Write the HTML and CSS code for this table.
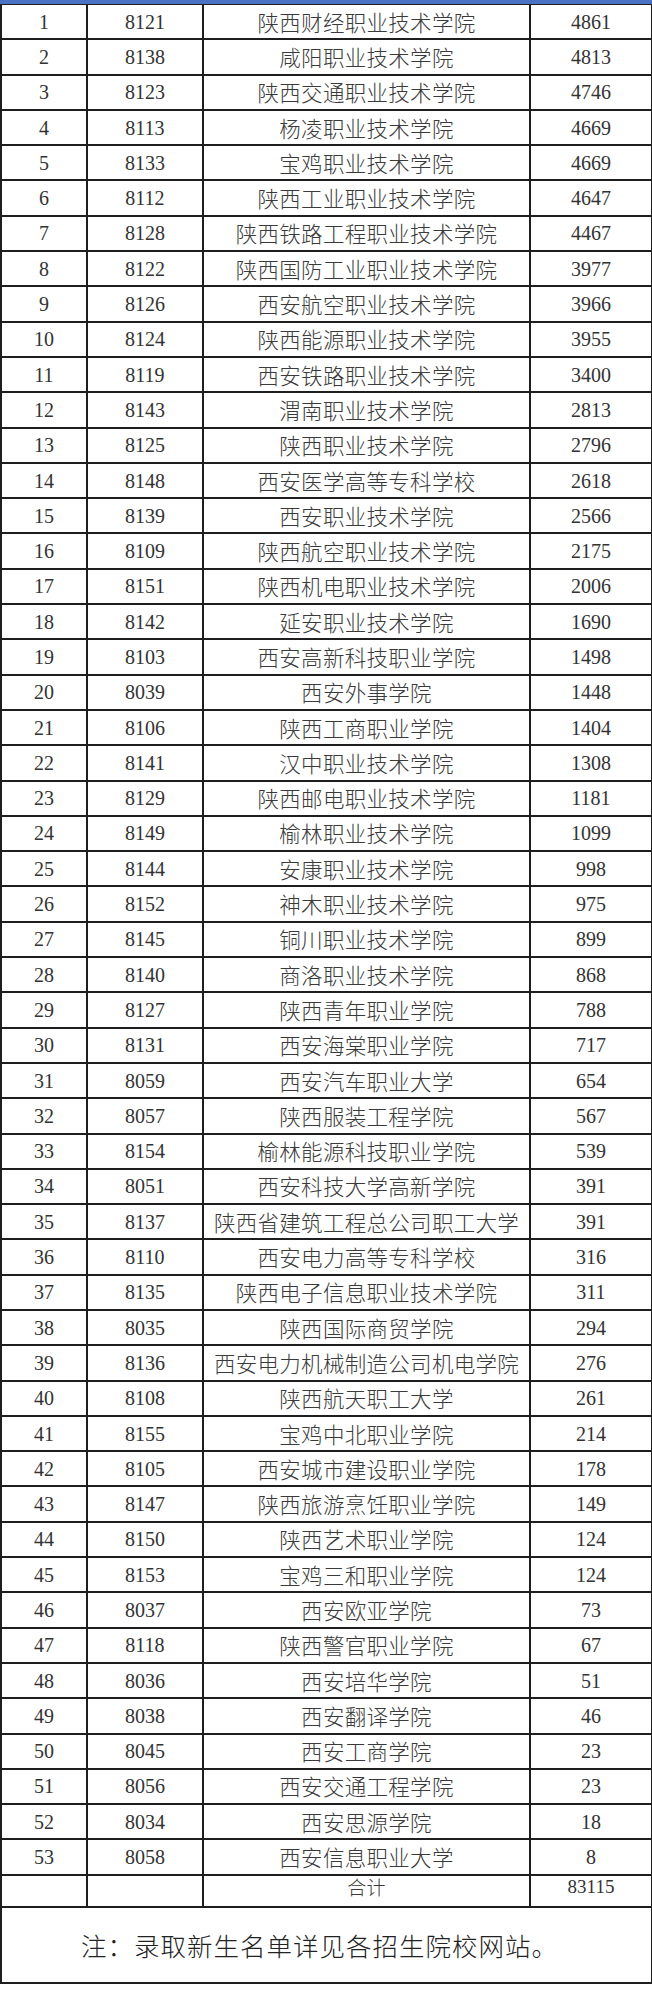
FILE: index.html
```html
<!DOCTYPE html>
<html lang="zh">
<head>
<meta charset="utf-8">
<link rel="stylesheet" href="styles.css">
</head>
<body>
<div class="topbar"></div>
<table class="list">
<colgroup><col class="c1"><col class="c2"><col class="c3"><col class="c4"></colgroup>
<tbody>
<tr><td>1</td><td>8121</td><td class="zh">陕西财经职业技术学院</td><td>4861</td></tr>
<tr><td>2</td><td>8138</td><td class="zh">咸阳职业技术学院</td><td>4813</td></tr>
<tr><td>3</td><td>8123</td><td class="zh">陕西交通职业技术学院</td><td>4746</td></tr>
<tr><td>4</td><td>8113</td><td class="zh">杨凌职业技术学院</td><td>4669</td></tr>
<tr><td>5</td><td>8133</td><td class="zh">宝鸡职业技术学院</td><td>4669</td></tr>
<tr><td>6</td><td>8112</td><td class="zh">陕西工业职业技术学院</td><td>4647</td></tr>
<tr><td>7</td><td>8128</td><td class="zh">陕西铁路工程职业技术学院</td><td>4467</td></tr>
<tr><td>8</td><td>8122</td><td class="zh">陕西国防工业职业技术学院</td><td>3977</td></tr>
<tr><td>9</td><td>8126</td><td class="zh">西安航空职业技术学院</td><td>3966</td></tr>
<tr><td>10</td><td>8124</td><td class="zh">陕西能源职业技术学院</td><td>3955</td></tr>
<tr><td>11</td><td>8119</td><td class="zh">西安铁路职业技术学院</td><td>3400</td></tr>
<tr><td>12</td><td>8143</td><td class="zh">渭南职业技术学院</td><td>2813</td></tr>
<tr><td>13</td><td>8125</td><td class="zh">陕西职业技术学院</td><td>2796</td></tr>
<tr><td>14</td><td>8148</td><td class="zh">西安医学高等专科学校</td><td>2618</td></tr>
<tr><td>15</td><td>8139</td><td class="zh">西安职业技术学院</td><td>2566</td></tr>
<tr><td>16</td><td>8109</td><td class="zh">陕西航空职业技术学院</td><td>2175</td></tr>
<tr><td>17</td><td>8151</td><td class="zh">陕西机电职业技术学院</td><td>2006</td></tr>
<tr><td>18</td><td>8142</td><td class="zh">延安职业技术学院</td><td>1690</td></tr>
<tr><td>19</td><td>8103</td><td class="zh">西安高新科技职业学院</td><td>1498</td></tr>
<tr><td>20</td><td>8039</td><td class="zh">西安外事学院</td><td>1448</td></tr>
<tr><td>21</td><td>8106</td><td class="zh">陕西工商职业学院</td><td>1404</td></tr>
<tr><td>22</td><td>8141</td><td class="zh">汉中职业技术学院</td><td>1308</td></tr>
<tr><td>23</td><td>8129</td><td class="zh">陕西邮电职业技术学院</td><td>1181</td></tr>
<tr><td>24</td><td>8149</td><td class="zh">榆林职业技术学院</td><td>1099</td></tr>
<tr><td>25</td><td>8144</td><td class="zh">安康职业技术学院</td><td>998</td></tr>
<tr><td>26</td><td>8152</td><td class="zh">神木职业技术学院</td><td>975</td></tr>
<tr><td>27</td><td>8145</td><td class="zh">铜川职业技术学院</td><td>899</td></tr>
<tr><td>28</td><td>8140</td><td class="zh">商洛职业技术学院</td><td>868</td></tr>
<tr><td>29</td><td>8127</td><td class="zh">陕西青年职业学院</td><td>788</td></tr>
<tr><td>30</td><td>8131</td><td class="zh">西安海棠职业学院</td><td>717</td></tr>
<tr><td>31</td><td>8059</td><td class="zh">西安汽车职业大学</td><td>654</td></tr>
<tr><td>32</td><td>8057</td><td class="zh">陕西服装工程学院</td><td>567</td></tr>
<tr><td>33</td><td>8154</td><td class="zh">榆林能源科技职业学院</td><td>539</td></tr>
<tr><td>34</td><td>8051</td><td class="zh">西安科技大学高新学院</td><td>391</td></tr>
<tr><td>35</td><td>8137</td><td class="zh">陕西省建筑工程总公司职工大学</td><td>391</td></tr>
<tr><td>36</td><td>8110</td><td class="zh">西安电力高等专科学校</td><td>316</td></tr>
<tr><td>37</td><td>8135</td><td class="zh">陕西电子信息职业技术学院</td><td>311</td></tr>
<tr><td>38</td><td>8035</td><td class="zh">陕西国际商贸学院</td><td>294</td></tr>
<tr><td>39</td><td>8136</td><td class="zh">西安电力机械制造公司机电学院</td><td>276</td></tr>
<tr><td>40</td><td>8108</td><td class="zh">陕西航天职工大学</td><td>261</td></tr>
<tr><td>41</td><td>8155</td><td class="zh">宝鸡中北职业学院</td><td>214</td></tr>
<tr><td>42</td><td>8105</td><td class="zh">西安城市建设职业学院</td><td>178</td></tr>
<tr><td>43</td><td>8147</td><td class="zh">陕西旅游烹饪职业学院</td><td>149</td></tr>
<tr><td>44</td><td>8150</td><td class="zh">陕西艺术职业学院</td><td>124</td></tr>
<tr><td>45</td><td>8153</td><td class="zh">宝鸡三和职业学院</td><td>124</td></tr>
<tr><td>46</td><td>8037</td><td class="zh">西安欧亚学院</td><td>73</td></tr>
<tr><td>47</td><td>8118</td><td class="zh">陕西警官职业学院</td><td>67</td></tr>
<tr><td>48</td><td>8036</td><td class="zh">西安培华学院</td><td>51</td></tr>
<tr><td>49</td><td>8038</td><td class="zh">西安翻译学院</td><td>46</td></tr>
<tr><td>50</td><td>8045</td><td class="zh">西安工商学院</td><td>23</td></tr>
<tr><td>51</td><td>8056</td><td class="zh">西安交通工程学院</td><td>23</td></tr>
<tr><td>52</td><td>8034</td><td class="zh">西安思源学院</td><td>18</td></tr>
<tr><td>53</td><td>8058</td><td class="zh">西安信息职业大学</td><td>8</td></tr>
<tr class="total"><td></td><td></td><td class="zh">合计</td><td>83115</td></tr>
<tr class="note"><td colspan="4">注：录取新生名单详见各招生院校网站。</td></tr>
</tbody>
</table>
</body>
</html>
```

FILE: styles.css
```css
html, body {
  margin: 0;
  padding: 0;
  background: #ffffff;
}

body {
  width: 652px;
  color: #333333;
  font-family: "Liberation Serif", "Noto Sans CJK SC", serif;
}

.topbar {
  height: 4px;
  background: #4a72c4;
}

.list {
  width: 651px;
  border-collapse: collapse;
  table-layout: fixed;
}

.c1 { width: 86px; }
.c2 { width: 116px; }
.c3 { width: 327px; }
.c4 { width: 122px; }

.list td {
  border: 2px solid #1e1e1e;
  height: 33.3px;
  padding: 0;
  text-align: center;
  vertical-align: middle;
  font-size: 20px;
  line-height: 22px;
  white-space: nowrap;
}

.list tr:first-child td {
  border-top: 1px solid #1e1e1e;
}

.list td.zh {
  font-family: "Noto Sans CJK SC", sans-serif;
  font-size: 21.5px;
  font-weight: 300;
  letter-spacing: 0.3px;
  color: #3a3a3a;
}

.list .total td {
  height: 30px;
  font-size: 19px;
  vertical-align: top;
}

.list .note td {
  height: 74px;
  font-family: "Noto Sans CJK SC", sans-serif;
  font-size: 25.5px;
  font-weight: 300;
  letter-spacing: 1px;
  color: #222222;
  padding-right: 14px;
}
```
